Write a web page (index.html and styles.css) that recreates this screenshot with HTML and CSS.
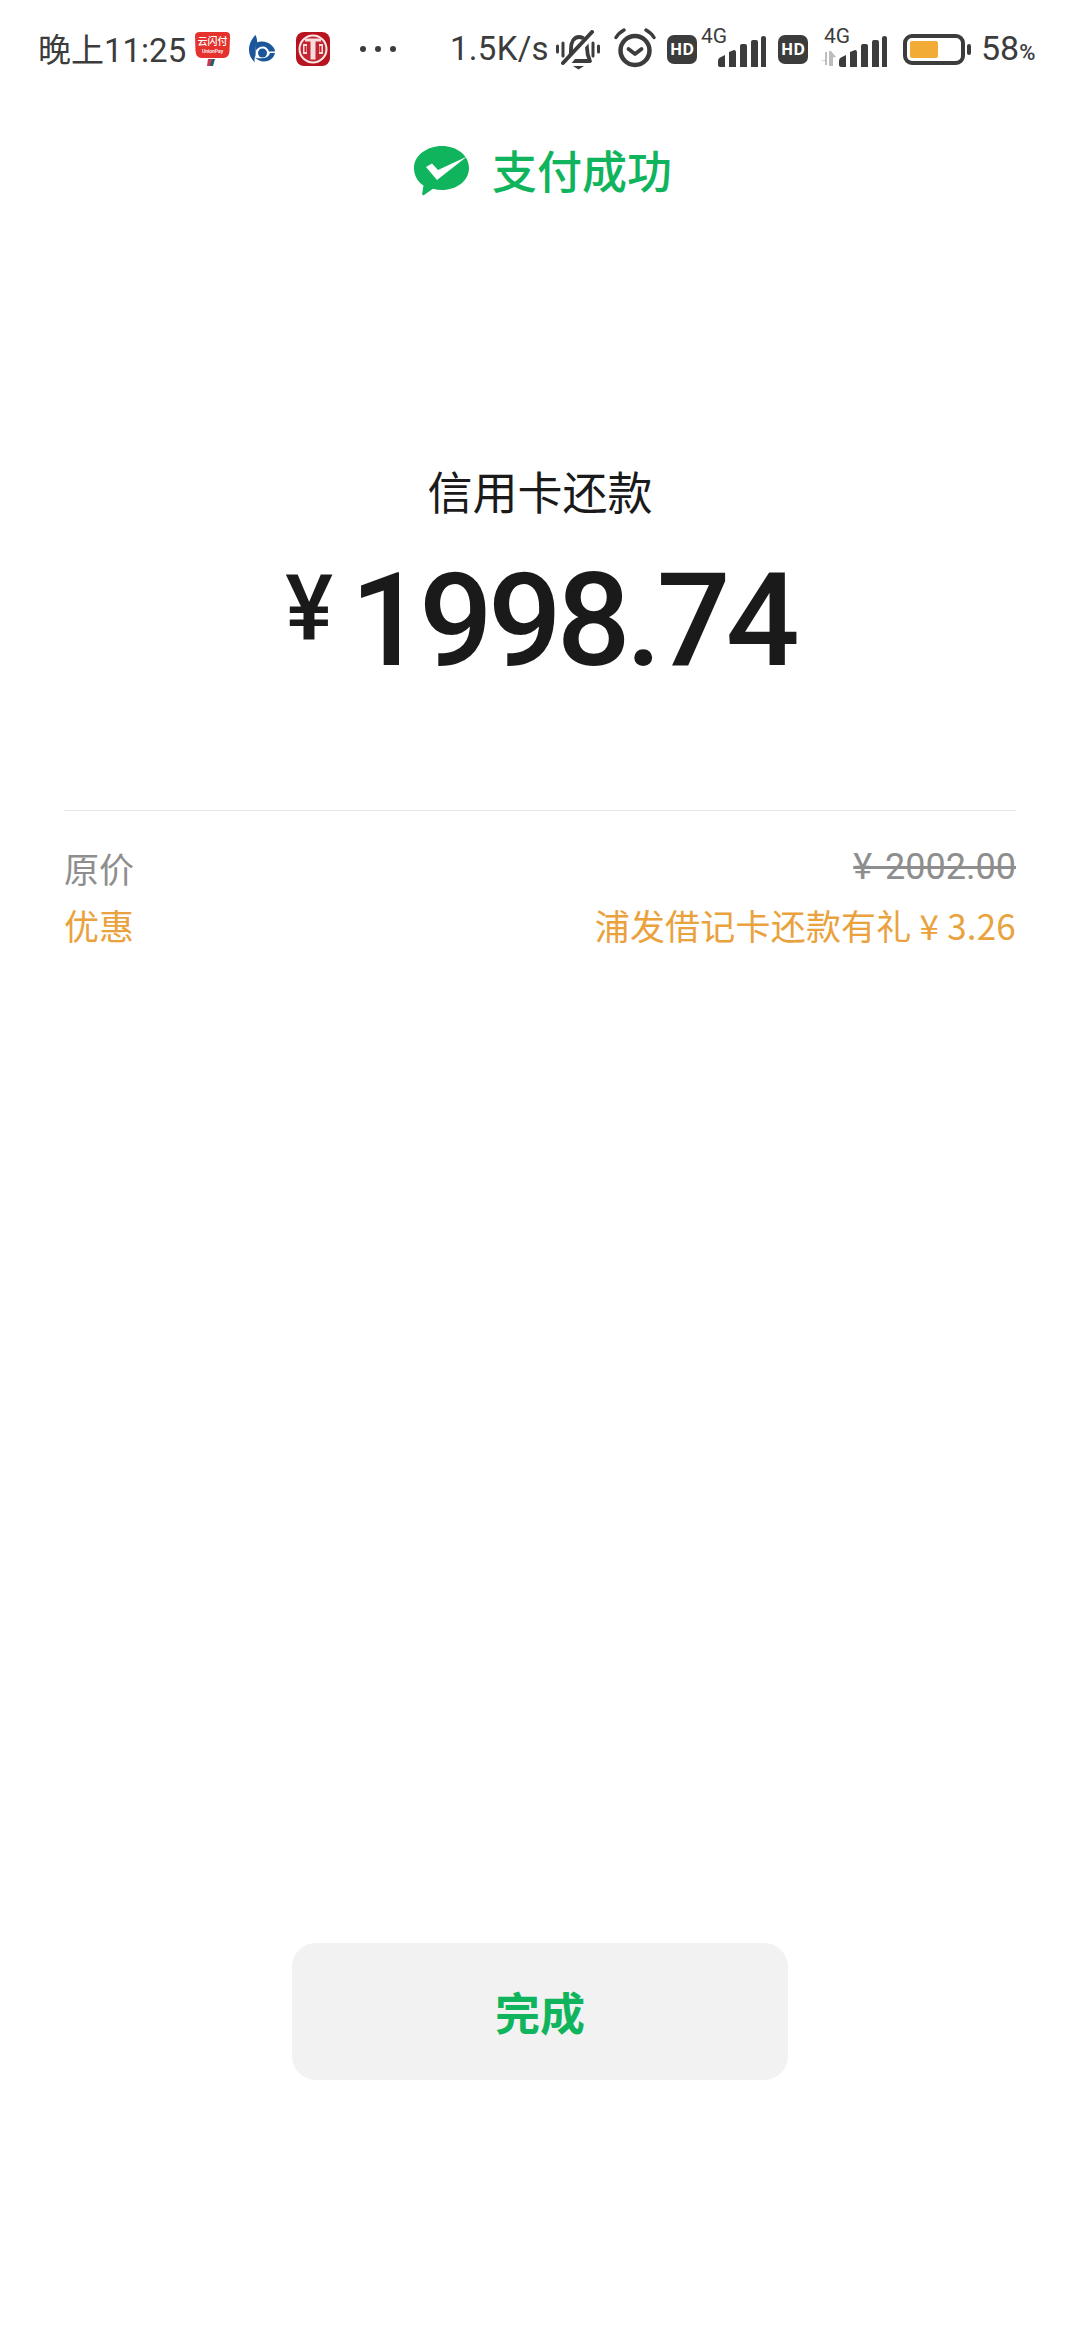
FILE: index.html
```html
<!DOCTYPE html>
<html lang="zh-CN">
<head>
<meta charset="utf-8">
<title>支付成功</title>
<link rel="stylesheet" href="styles.css">
</head>
<body>
<div class="page">
  <div class="status">
    <span class="time">晚上11:25</span>
    <svg class="ic-union" width="36" height="36" viewBox="0 0 36 36">
      <path d="M5 1h26q4 0 4 4l-.5 15q-.5 7-6 7H6.500q-5.500 0-6-7L0 5q0-4 5-4z" fill="#e5322d"/>
      <path d="M13 28h5l-2 7h-4z" fill="#c83a4a"/><path d="M17 28h3l-2 7h-3z" fill="#1d5e7a"/>
      <text x="17.500" y="14" class="union-a">云闪付</text>
      <text x="17.500" y="22" class="union-b">UnionPay</text>
    </svg>
    <svg class="ic-blue" width="26" height="28" viewBox="0 0 26 28">
      <path d="M6.500 0C2.500 4 0 9 0 15c0 5 2 9 6 12.500-1-2.500-.5-5 .5-7L7 9.500C9 8 8 3 6.500 0z" fill="#1b569b"/>
      <path d="M7 7.500c4-1.500 8-1.500 11 0 5 2 8 6 8 9h-6c-1-3-3-5-6-5-3 0-6 2-7 4z" fill="#1b569b"/>
      <path d="M26 18c-1 5-6 8.500-11 8.500-4 0-7-2-9-4 3 1 6 1 9 .5 3-.5 5-2 6-5z" fill="#1b569b"/>
      <circle cx="13.500" cy="18" r="4.500" fill="#1b569b"/>
    </svg>
    <svg class="ic-citic" width="34" height="34" viewBox="0 0 34 34">
      <rect width="34" height="34" rx="8" fill="#b8141f"/>
      <circle cx="17" cy="17" r="14.500" fill="#f8e8e8"/>
      <circle cx="17" cy="17" r="12.500" fill="#c22630"/>
      <path d="M9 6.500h16v3h-5.500v18h-5v-18H9z" fill="#f6dcdc"/>
      <path d="M7 12h4v10H7zM23 12h4v10h-4z" fill="#f6dcdc"/>
      <path d="M8.500 14h2v6h-2zM23.500 14h2v6h-2z" fill="#c22630"/>
    </svg>
    <span class="dots"><i></i><i></i><i></i></span>
    <span class="speed">1.5K/s</span>
    <svg class="ic-bell" width="44" height="40" viewBox="0 0 44 40">
      <path d="M12 31c3-3 3-7 3-12 0-7 3-12 8-12s8 4 8 11c0 6 1 9 3 13z" fill="none" stroke="#3c3c3c" stroke-width="3.800" stroke-linejoin="round"/>
      <path d="M11 33L37 3" stroke="#fff" stroke-width="7"/>
      <path d="M7 33L36 2" stroke="#3c3c3c" stroke-width="4" stroke-linecap="round"/>
      <path d="M17 36h11l-5.500 3.500z" fill="#3c3c3c"/>
      <path d="M1.500 16v6M7 13v13M37 13v13M42.500 16v6" stroke="#3c3c3c" stroke-width="3" stroke-linecap="round"/>
    </svg>
    <svg class="ic-alarm" width="42" height="40" viewBox="0 0 42 40">
      <circle cx="21" cy="22.500" r="14.500" fill="none" stroke="#3c3c3c" stroke-width="4.500"/>
      <path d="M14.500 21l6.500 5 6.500-5" fill="none" stroke="#3c3c3c" stroke-width="3.800" stroke-linecap="round" stroke-linejoin="round"/>
      <path d="M2 9.500C4 6 6.500 4 10 2M40 9.500C38 6 35.500 4 32 2" fill="none" stroke="#3c3c3c" stroke-width="3.400" stroke-linecap="round"/>
    </svg>
    <span class="hd">HD</span>
    <span class="signal">
      <span class="net">4G</span>
      <svg width="48" height="31" viewBox="0 0 48 31"><path d="M0 25q0-3 3-4l4-2v12H2q-2 0-2-2zM11 16l5-2q2 0 2 2v15h-7zM22 10q0-2 2-2h3q2 0 2 2v21h-7zM33 6q0-2 2-2h3q2 0 2 2v25h-7zM43 2q0-2 2.500-2 2.500 0 2.500 2v29h-5z" fill="#3c3c3c"/></svg>
    </span>
    <span class="hd hd2">HD</span>
    <span class="signal signal2">
      <span class="net">4G</span>
      <svg class="arrows" width="16" height="15" viewBox="0 0 16 15"><path d="M0 10l5-1V1h2v13H5v-4zM9 0h2l5 6-3 .500V15H9z" fill="#bdbdbd"/></svg>
      <svg width="48" height="31" viewBox="0 0 48 31"><path d="M0 25q0-3 3-4l4-2v12H2q-2 0-2-2zM11 16l5-2q2 0 2 2v15h-7zM22 10q0-2 2-2h3q2 0 2 2v21h-7zM33 6q0-2 2-2h3q2 0 2 2v25h-7zM43 2q0-2 2.500-2 2.500 0 2.500 2v29h-5z" fill="#3c3c3c"/></svg>
    </span>
    <svg class="ic-batt" width="68" height="31" viewBox="0 0 68 31">
      <rect x="2" y="2" width="58" height="27" rx="7" fill="none" stroke="#3c3c3c" stroke-width="4"/>
      <rect x="7" y="7" width="28" height="17" rx="2" fill="#f2ac35"/>
      <rect x="64" y="10" width="4" height="11" rx="2" fill="#3c3c3c"/>
    </svg>
    <span class="pct">58<small>%</small></span>
  </div>

  <div class="result">
    <svg class="logo" width="56" height="50" viewBox="0 0 56 50">
      <path d="M28 0c15 0 27 9.500 27 22S43 44 28 44c-3 0-6-.4-9-1.200L10 49c-1 .6-2 0-1.800-1.200l1.300-8.300C3.500 35.500 0 29.500 0 22 0 9.500 13 0 28 0z" fill="#10b45c"/>
      <path d="M12 21l6-3.500 6 6.500L53 10.500 23 34z" fill="#fff"/>
    </svg>
    <span class="result-text">支付成功</span>
  </div>

  <div class="merchant">信用卡还款</div>
  <div class="amount"><span class="yen">¥</span><span class="num">1998.74</span></div>

  <div class="details">
    <div class="row grey"><span>原价</span><del>¥ 2002.00</del></div>
    <div class="row orange"><span>优惠</span><span class="promo">浦发借记卡还款有礼 ¥ 3.26</span></div>
  </div>

  <div class="done">完成</div>
</div>
</body>
</html>
```
FILE: styles.css
```css
* { box-sizing: border-box; }
html, body { margin: 0; padding: 0; background: #fff; }
body { font-family: "Noto Sans CJK SC", "Noto Sans", sans-serif; }
.page { width: 1080px; height: 2340px; overflow: hidden; display: flex; flex-direction: column; }

.status { height: 98px; padding: 0 43px 0 38px; display: flex; align-items: center; color: #3c3c3c; font-family: Roboto, "Noto Sans CJK SC", sans-serif; font-size: 33px; flex: none; }
.time { width: 150px; white-space: nowrap; margin-top: -2px; }
.status svg { flex: none; display: block; }
.ic-union { margin-left: 7px; }
.union-a { font: 500 10px "Noto Sans CJK SC", sans-serif; fill: #fff; text-anchor: middle; }
.union-b { font: 500 5px Roboto, sans-serif; fill: #fff; text-anchor: middle; }
.ic-blue { margin-left: 18px; }
.ic-citic { margin-left: 21px; }
.dots { margin-left: 30px; width: 36px; display: flex; justify-content: space-between; }
.dots i { width: 6px; height: 6px; border-radius: 50%; background: #3c3c3c; }
.speed { margin-left: 54px; width: 103px; white-space: nowrap; letter-spacing: .3px; margin-top: -2px; }
.ic-bell { margin-left: 3px; margin-top: 1px; }
.ic-alarm { margin-left: 14px; margin-top: -2px; }
.hd { margin-left: 11px; width: 30px; height: 29px; border-radius: 7px; background: #3c3c3c; color: #fff; font: 700 16px/29px "Open Sans", sans-serif; text-align: center; flex: none; }
.signal { position: relative; margin-left: 21px; width: 48px; height: 35px; display: flex; align-items: flex-end; }
.net { position: absolute; left: -17px; top: -7px; font-size: 21px; line-height: 22px; color: #3c3c3c; }
.hd2 { margin-left: 12px; }
.signal2 { margin-left: 31px; }
.signal2 .net { left: -15px; }
.status .arrows { position: absolute; left: -19px; bottom: 1px; }
.ic-batt { margin-left: 16px; }
.pct { margin-left: 10px; font-size: 34px; white-space: nowrap; margin-top: -2px; }
.pct small { font-size: 22px; font-weight: 500; }

.result { margin-top: 48px; height: 50px; display: flex; justify-content: center; align-items: center; gap: 22px; flex: none; padding-left: 6px; }
.logo { display: block; }
.result-text { font-size: 45px; line-height: 50px; font-weight: 500; color: #10b45c; margin-top: -2px; }

.merchant { margin-top: 263px; text-align: center; font-size: 45px; line-height: 64px; color: #1a1a1a; flex: none; }
.amount { margin-top: 36px; height: 124px; display: flex; justify-content: center; align-items: center; color: #1a1a1a; font-family: Roboto, sans-serif; font-weight: 500; flex: none; }
.yen { font-size: 90px; line-height: 124px; margin-right: 17px; position: relative; top: -12px; }
.num { font-size: 130px; line-height: 124px; white-space: nowrap; letter-spacing: -5px; }

.details { margin: 127px 64px 0; border-top: 1px solid #e5e5e5; padding-top: 28px; flex: none; }
.row { display: flex; justify-content: space-between; font-size: 35px; line-height: 57px; }
.grey { color: #8e8e8e; }
.orange { color: #e9a23e; }
.row del { font-family: Roboto, sans-serif; font-size: 36px; word-spacing: 4px; }
.promo { letter-spacing: .2px; }

.done { margin: auto auto 260px; width: 496px; height: 137px; border-radius: 24px; background: #f2f2f2; color: #10b45c; font-size: 45px; font-weight: 700; line-height: 137px; text-align: center; flex: none; }
```
